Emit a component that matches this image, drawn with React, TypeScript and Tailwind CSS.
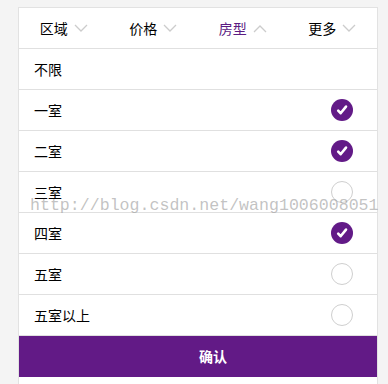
import * as React from 'react'

const tabs = [
  { label: '区域', active: false },
  { label: '价格', active: false },
  { label: '房型', active: true },
  { label: '更多', active: false },
]

const options = [
  { label: '不限', checked: null as boolean | null },
  { label: '一室', checked: true },
  { label: '二室', checked: true },
  { label: '三室', checked: false },
  { label: '四室', checked: true },
  { label: '五室', checked: false },
  { label: '五室以上', checked: false },
]

function Chevron({ up }: { up: boolean }) {
  return (
    <svg width="14" height="9" viewBox="0 0 14 9" className="ml-1.5">
      <path
        d={up ? 'M1 8 L7 2 L13 8' : 'M1 1 L7 7 L13 1'}
        fill="none"
        stroke="#cccccc"
        strokeWidth="1.3"
      />
    </svg>
  )
}

function Check({ on }: { on: boolean }) {
  if (!on) {
    return <div className="h-[22px] w-[22px] rounded-full border border-[#cfcfcf] bg-white" />
  }
  return (
    <div className="flex h-[22px] w-[22px] items-center justify-center rounded-full bg-[#621a87]">
      <svg width="12" height="12" viewBox="0 0 12 12">
        <path d="M2.2 6.6 L4.6 9.2 L10 2.6" fill="none" stroke="#fff" strokeWidth="2.6" strokeLinecap="round" strokeLinejoin="round" />
      </svg>
    </div>
  )
}

export default function App() {
  return (
    <main
      className="h-[384px] w-[388px] bg-[#f4f4f4] pl-[18px] pr-[10px] pt-[7px]"
      style={{ fontFamily: '"Noto Sans CJK SC", "Liberation Sans", sans-serif' }}
    >
      <div className="relative h-full border-x border-t border-[#e2e2e2] bg-white">
        <div className="grid h-[41px] grid-cols-4 border-b border-[#e0e0e0]">
          {tabs.map((t) => (
            <div key={t.label} className="flex items-center justify-center">
              <span className={`text-[14px] ${t.active ? 'text-[#5b1c83]' : 'text-black'}`}>{t.label}</span>
              <Chevron up={t.active} />
            </div>
          ))}
        </div>

        {options.map((o) => (
          <div
            key={o.label}
            className="flex h-[41px] items-center justify-between border-b border-[#e0e0e0] pl-[15px] pr-[24px]"
          >
            <span className="text-[14px] text-black">{o.label}</span>
            {o.checked !== null && <Check on={o.checked} />}
          </div>
        ))}

        <button className="flex h-[41px] w-full items-center justify-center bg-[#621a86] pl-[30px] text-[14px] font-bold text-white">
          确认
        </button>

        <div
          className="pointer-events-none absolute left-[11px] top-[186px] whitespace-nowrap text-[16.6px] text-[#9a9a9a]/60"
          style={{ fontFamily: '"Liberation Mono", monospace' }}
        >
          http://blog.csdn.net/wang1006008051
        </div>
      </div>
    </main>
  )
}
